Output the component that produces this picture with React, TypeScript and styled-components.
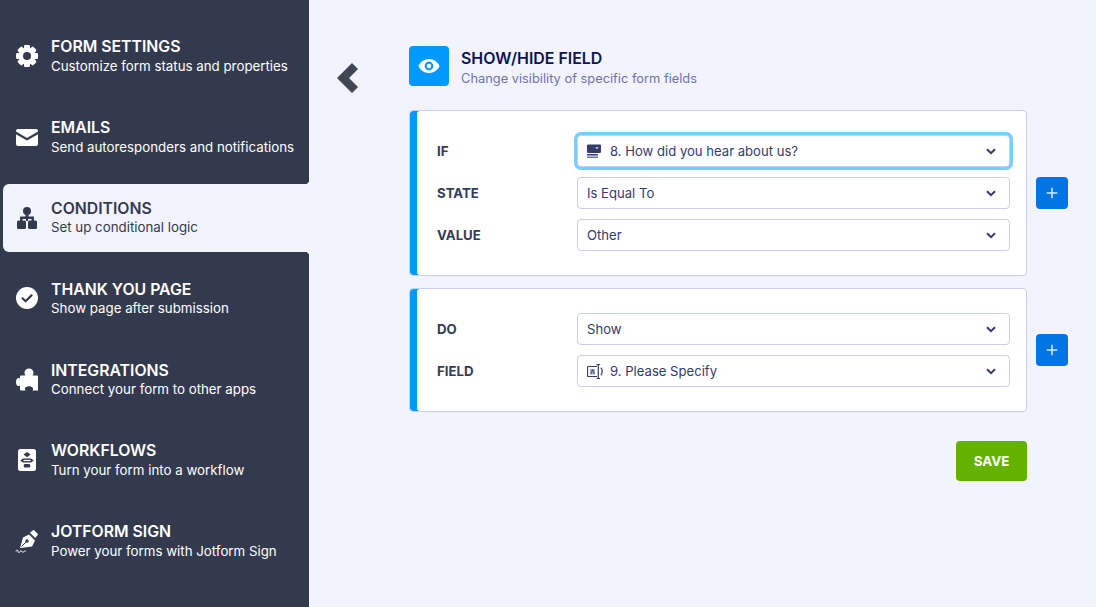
import styled, { createGlobalStyle } from 'styled-components'
import { ReactNode } from 'react'

const GlobalStyle = createGlobalStyle`
  html, body {
    margin: 0;
    height: 100%;
    background: #f3f3fe;
    overflow: hidden;
  }
  * {
    box-sizing: border-box;
  }
`

const Page = styled.div`
  width: 1096px;
  height: 607px;
  display: flex;
  font-family: 'Inter', 'Liberation Sans', sans-serif;
  background: #f3f3fe;
`

const Sidebar = styled.nav`
  width: 309px;
  flex: none;
  padding: 22px 0 0 3px;
  display: flex;
  flex-direction: column;
  gap: 12.83px;
  background: #343a4d;
`

const NavItem = styled.a<{ $active?: boolean }>`
  position: relative;
  height: 68px;
  display: flex;
  align-items: center;
  gap: 12px;
  padding-left: 12px;
  border-radius: 6px 0 0 6px;
  color: ${({ $active }) => ($active ? '#343a4d' : '#fff')};
  background: ${({ $active }) => ($active ? '#f3f3fe' : 'transparent')};

  ${({ $active }) =>
    $active &&
    `
    &::before,
    &::after {
      content: '';
      position: absolute;
      right: 0;
      width: 3px;
      height: 3px;
    }
    &::before {
      top: -3px;
      background: radial-gradient(circle at 0 0, #343a4d 2.6px, #f3f3fe 3px);
    }
    &::after {
      bottom: -3px;
      background: radial-gradient(circle at 0 100%, #343a4d 2.6px, #f3f3fe 3px);
    }
  `}
`

const NavIcon = styled.span`
  width: 24px;
  height: 24px;
  flex: none;
  display: block;

  svg {
    display: block;
    width: 24px;
    height: 24px;
  }
`

const NavText = styled.div`
  display: flex;
  flex-direction: column;
  gap: 0.6px;
  padding-top: 1px;
  white-space: nowrap;
`

const NavTitle = styled.div`
  font-size: 15.8px;
  line-height: 18px;
  font-weight: 600;
`

const NavSub = styled.div`
  font-size: 13.3px;
  line-height: 18px;
  font-weight: 400;
`

const Content = styled.main`
  flex: 1;
  display: flex;
  padding: 46px 28px 0 28px;
`

const BackButton = styled.div`
  width: 22px;
  height: 30px;
  margin-top: 17px;
  margin-right: 50px;
  flex: none;

  svg {
    display: block;
  }
`

const Column = styled.div`
  width: 659px;
  flex: none;
  display: flex;
  flex-direction: column;
`

const Header = styled.header`
  height: 40px;
  display: flex;
  align-items: flex-start;
  gap: 12px;
  margin-bottom: 24px;
`

const HeaderIcon = styled.div`
  width: 40px;
  height: 40px;
  display: flex;
  align-items: center;
  justify-content: center;
  border-radius: 4px;
  background: #0099ff;
`

const HeaderText = styled.div`
  padding-top: 3px;
`

const HeaderTitle = styled.h1`
  margin: 0 0 1px;
  font-size: 15.9px;
  line-height: 20px;
  font-weight: 600;
  color: #0a1551;
`

const HeaderSub = styled.p`
  margin: 0;
  font-size: 12.85px;
  line-height: 18px;
  color: #6c73a8;
`

const CardRow = styled.div`
  display: flex;
  align-items: center;
  gap: 9px;
  margin-bottom: 12px;
`

const Card = styled.section`
  width: 618px;
  flex: none;
  display: flex;
  flex-direction: column;
  gap: 10px;
  padding: 24px 16px 24px 27px;
  border: 1px solid #c8ceed;
  border-radius: 4px;
  background: #fff;
  box-shadow: inset 7px 0 0 #0099ff;
`

const Row = styled.div`
  display: flex;
  align-items: center;
`

const Label = styled.label`
  width: 140px;
  flex: none;
  font-size: 13.2px;
  font-weight: 700;
  color: #343c55;
`

const Select = styled.div<{ $focused?: boolean }>`
  width: 433px;
  height: 32px;
  flex: none;
  display: flex;
  align-items: center;
  gap: 7px;
  padding: 0 13px 0 9px;
  border: 1px solid #c8ceed;
  border-radius: 4px;
  background: #fff;
  font-size: 13.1px;
  color: #343c6a;
  box-shadow: ${({ $focused }) => ($focused ? '0 0 0 3px #77cfff' : 'none')};
`

const SelectText = styled.span`
  flex: 1;
  white-space: nowrap;
`

const Chevron = styled.svg`
  width: 10px;
  height: 7px;
  flex: none;
`

const PlusButton = styled.button`
  width: 32px;
  height: 32px;
  flex: none;
  display: flex;
  align-items: center;
  justify-content: center;
  padding: 0;
  border: none;
  border-radius: 4px;
  background: #0075e3;
`

const Footer = styled.div`
  width: 618px;
  display: flex;
  justify-content: flex-end;
  margin-top: 17px;
`

const SaveButton = styled.button`
  width: 71px;
  height: 40px;
  border: none;
  border-radius: 4px;
  background: #64b200;
  color: #fff;
  font-family: inherit;
  font-size: 13.4px;
  font-weight: 700;
`

const GearIcon = () => (
  <svg viewBox="0 0 24 24">
    <g fill="currentColor">
      <circle cx="12" cy="12" r="8.6" />
      {[0, 45, 90, 135].map((angle) => (
        <rect key={angle} x="9" y="1" width="6" height="22" rx="1.2" transform={`rotate(${angle} 12 12)`} />
      ))}
    </g>
    <circle cx="12" cy="12" r="4" fill="#343a4d" />
  </svg>
)

const MailIcon = () => (
  <svg viewBox="0 0 24 24" fill="currentColor">
    <path d="M1 6A2 2 0 0 1 3 4h18a2 2 0 0 1 2 2v.6l-11 6.400L1 6.600z" />
    <path d="M1 9.200l11 6.400 11-6.400V19a2 2 0 0 1-2 2H3a2 2 0 0 1-2-2z" />
  </svg>
)

const ConditionsIcon = () => (
  <svg viewBox="0 0 24 24" fill="currentColor">
    <circle cx="12" cy="5" r="4" />
    <rect x="10.500" y="8" width="3" height="3" />
    <rect x="5" y="10.500" width="14" height="2.500" rx=".5" />
    <rect x="2" y="14.500" width="9" height="8.500" rx="1.500" />
    <rect x="13" y="14.500" width="9" height="8.500" rx="1.500" />
    <rect x="5" y="12" width="2.500" height="3" />
    <rect x="16.500" y="12" width="2.500" height="3" />
    <rect x="11" y="12" width="2" height="3" />
  </svg>
)

const CheckIcon = () => (
  <svg viewBox="0 0 24 24">
    <circle cx="12" cy="12" r="11" fill="currentColor" />
    <path d="M7.500 12.300l3.100 3 6-6" fill="none" stroke="#343a4d" strokeWidth="2.200" strokeLinecap="round" strokeLinejoin="round" />
  </svg>
)

const PuzzleIcon = () => (
  <svg viewBox="0 0 24 24" fill="currentColor">
    <path d="M10.500 8.500c-.6-1-1-1.700-1-2.800C9.500 3.200 11.500 1.500 14 1.500s4.500 1.700 4.500 4.200c0 1.100-.4 1.800-1 2.800H22a1 1 0 0 1 1 1v14h-5.500c.4-.7.6-1.200.6-1.900 0-1.400-1.700-2.400-4.100-2.400s-4.100 1-4.100 2.400c0 .7.200 1.200.6 1.900H6a1 1 0 0 1-1-1v-4c-.6.400-1 .6-1.600.6C2 19.100 1 17.300 1 15s1-4.100 2.400-4.100c.6 0 1 .2 1.600.6v-2a1 1 0 0 1 1-1z" />
  </svg>
)

const WorkflowIcon = () => (
  <svg viewBox="0 0 24 24">
    <rect x="3" y="1" width="18" height="22" rx="2.500" fill="currentColor" />
    <g fill="#343a4d">
      <path d="M12 4l3.500 2.600L12 9.200 8.500 6.600z" />
      <path d="M5.200 12.500l2.800-2h8l2.800 2-2.800 2H8z" />
      <rect x="8.800" y="16" width="6.400" height="3.600" rx="1.200" />
    </g>
    <rect x="8.500" y="11.900" width="7" height="1.200" fill="currentColor" />
  </svg>
)

const PenIcon = () => (
  <svg viewBox="0 0 24 24">
    <path fill="currentColor" d="M5 19L8 8.500l6-3 6 6-3 6z" />
    <path fill="currentColor" d="M15 3.700l3-2.500c.4-.3.800-.3 1.100 0l3.600 3.600c.3.300.3.700 0 1.100l-2.500 3z" />
    <path d="M6.500 17.500l5-5" stroke="#343a4d" strokeWidth="1" />
    <circle cx="12" cy="12" r="1.700" fill="#343a4d" />
    <path d="M1 22.500c.7-2.200 1.400-2.200 2 0s1.400 1 2 0 1.200-1 1.800 0 1.500.8 2.200 0 1.200-.6 2 0" fill="none" stroke="currentColor" strokeWidth="1" />
  </svg>
)

const navItems: { icon: ReactNode; title: string; sub: string; active?: boolean }[] = [
  { icon: <GearIcon />, title: 'FORM SETTINGS', sub: 'Customize form status and properties' },
  { icon: <MailIcon />, title: 'EMAILS', sub: 'Send autoresponders and notifications' },
  { icon: <ConditionsIcon />, title: 'CONDITIONS', sub: 'Set up conditional logic', active: true },
  { icon: <CheckIcon />, title: 'THANK YOU PAGE', sub: 'Show page after submission' },
  { icon: <PuzzleIcon />, title: 'INTEGRATIONS', sub: 'Connect your form to other apps' },
  { icon: <WorkflowIcon />, title: 'WORKFLOWS', sub: 'Turn your form into a workflow' },
  { icon: <PenIcon />, title: 'JOTFORM SIGN', sub: 'Power your forms with Jotform Sign' },
]

const DropdownIcon = () => (
  <svg width="16" height="16" viewBox="0 0 16 16" fill="#343c6a">
    <path fillRule="evenodd" d="M1.200 1.500h11.600A1.200 1.200 0 0 1 14 2.700v6a1.200 1.200 0 0 1-1.200 1.200H1.200A1.200 1.200 0 0 1 0 8.700v-6a1.200 1.200 0 0 1 1.200-1.200zM8.500 4.500l1.500 1.500 1.500-1.500-.6-.6-.9.900-.9-.9z" />
    <rect x="0" y="11" width="11" height="1.500" rx=".5" />
    <rect x="0" y="13.500" width="11" height="1.500" rx=".5" fill="#6c73a8" />
  </svg>
)

const TextboxIcon = () => (
  <svg width="16" height="16" viewBox="0 0 16 16" fill="none" stroke="#343c6a" strokeWidth="1.200">
    <path d="M10 3.500H1.500a1 1 0 0 0-1 1v8a1 1 0 0 0 1 1H10" />
    <rect x="3" y="6" width="5" height="5.500" fill="#aab0d6" stroke="none" />
    <path d="M3.800 11l1.700-4.500L7.200 11" strokeWidth=".9" />
    <path d="M11.300 2v13M9.500 1.500h3.600M9.500 15.500h3.600" />
    <path d="M13.800 4.800c1 .8 1.400 2.200 1.400 3.700s-.4 2.900-1.400 3.700" />
  </svg>
)

const Field = ({ label, value, icon, focused }: { label: string; value: string; icon?: ReactNode; focused?: boolean }) => (
  <Row>
    <Label>{label}</Label>
    <Select $focused={focused}>
      {icon}
      <SelectText>{value}</SelectText>
      <Chevron viewBox="0 0 10 7" fill="none" stroke="#343c6a" strokeWidth="2">
        <path d="M1 1.200L5 5.200l4-4" />
      </Chevron>
    </Select>
  </Row>
)

const Plus = () => (
  <PlusButton>
    <svg width="12" height="12" viewBox="0 0 12 12" stroke="#d6ebff" strokeWidth="1.500">
      <path d="M6 .7v10.600M.7 6h10.600" />
    </svg>
  </PlusButton>
)

export default function App() {
  return (
    <Page>
      <GlobalStyle />
      <Sidebar>
        {navItems.map((item) => (
          <NavItem key={item.title} $active={item.active}>
            <NavIcon>{item.icon}</NavIcon>
            <NavText>
              <NavTitle>{item.title}</NavTitle>
              <NavSub>{item.sub}</NavSub>
            </NavText>
          </NavItem>
        ))}
      </Sidebar>
      <Content>
        <BackButton>
          <svg width="22" height="30" viewBox="0 0 22 30" fill="#3f4757">
            <path d="M0 15L15 0l6 6-9 9 9 9-6 6z" />
          </svg>
        </BackButton>
        <Column>
          <Header>
            <HeaderIcon>
              <svg width="22" height="14" viewBox="0 0 22 14">
                <path fillRule="evenodd" fill="#fff" d="M11 0c5 0 8.800 3 10.500 7C19.800 11 16 14 11 14S2.200 11 .5 7C2.200 3 6 0 11 0zM11 2.600a4.400 4.400 0 1 0 0 8.800 4.400 4.400 0 0 0 0-8.800z" />
                <circle cx="11" cy="7" r="2.200" fill="#fff" />
              </svg>
            </HeaderIcon>
            <HeaderText>
              <HeaderTitle>SHOW/HIDE FIELD</HeaderTitle>
              <HeaderSub>Change visibility of specific form fields</HeaderSub>
            </HeaderText>
          </Header>
          <CardRow>
            <Card>
              <Field label="IF" value="8. How did you hear about us?" icon={<DropdownIcon />} focused />
              <Field label="STATE" value="Is Equal To" />
              <Field label="VALUE" value="Other" />
            </Card>
            <Plus />
          </CardRow>
          <CardRow>
            <Card>
              <Field label="DO" value="Show" />
              <Field label="FIELD" value="9. Please Specify" icon={<TextboxIcon />} />
            </Card>
            <Plus />
          </CardRow>
          <Footer>
            <SaveButton>SAVE</SaveButton>
          </Footer>
        </Column>
      </Content>
    </Page>
  )
}
